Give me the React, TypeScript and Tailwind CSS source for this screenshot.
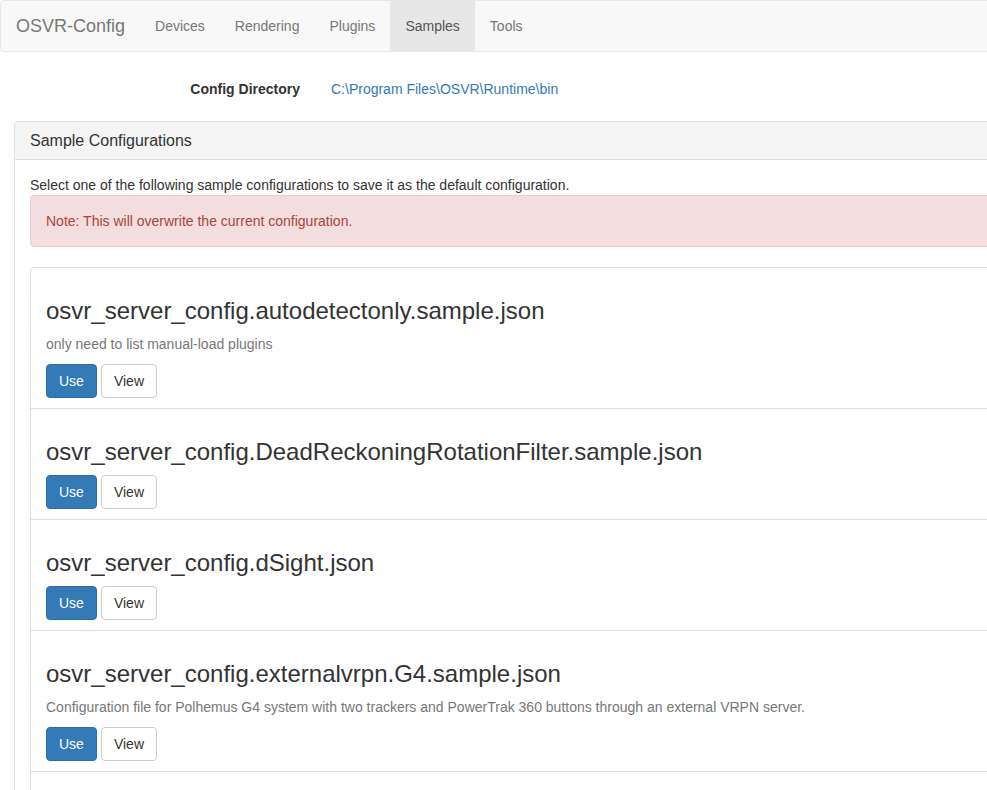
import React from "react";

type Sample = { name: string; description?: string };

const samples: Sample[] = [
  { name: "osvr_server_config.autodetectonly.sample.json", description: "only need to list manual-load plugins" },
  { name: "osvr_server_config.DeadReckoningRotationFilter.sample.json" },
  { name: "osvr_server_config.dSight.json" },
  {
    name: "osvr_server_config.externalvrpn.G4.sample.json",
    description:
      "Configuration file for Polhemus G4 system with two trackers and PowerTrak 360 buttons through an external VRPN server.",
  },
  { name: "osvr_server_config.HDK.sample.json" },
];

const navItems = ["Devices", "Rendering", "Plugins", "Samples", "Tools"];

function SampleItem({ s, first }: { s: Sample; first: boolean }) {
  return (
    <div
      className={`border border-[#ddd] bg-white px-[15px] py-[10px] ${first ? "rounded-t" : "-mt-px"}`}
    >
      <h3 className="mt-[20px] mb-[10px] text-[24px] leading-[26px] font-normal text-[#333]">{s.name}</h3>
      {s.description ? <p className="mb-[10px] text-[14px] leading-[20px] text-[#777]">{s.description}</p> : null}
      <div className="flex gap-[4px]">
        <button className="rounded border border-[#2e6da4] bg-[#337ab7] px-[12px] py-[6px] text-[14px] leading-[20px] text-white">
          Use
        </button>
        <button className="rounded border border-[#ccc] bg-white px-[12px] py-[6px] text-[14px] leading-[20px] text-[#333]">
          View
        </button>
      </div>
    </div>
  );
}

export default function App() {
  return (
    <div className="w-full overflow-hidden bg-white text-[14px] leading-[20px] text-[#333] font-['Liberation_Sans',Arial,sans-serif]">
      <div className="w-[1200px]">
        <nav className="mb-[20px] flex h-[52px] rounded border border-[#e7e7e7] bg-[#f8f8f8]">
          <div className="h-[50px] px-[15px] py-[15px] text-[18px] leading-[20px] text-[#777]">OSVR-Config</div>
          <div className="flex">
            {navItems.map((n) => (
              <div
                key={n}
                className={`h-[50px] px-[15px] py-[15px] text-[14px] leading-[20px] ${
                  n === "Samples" ? "bg-[#e7e7e7] text-[#555]" : "text-[#777]"
                }`}
              >
                {n}
              </div>
            ))}
          </div>
        </nav>

        <div className="mb-[15px] flex h-[34px]">
          <div className="w-[315px] px-[15px] pt-[7px] text-right font-bold">Config Directory</div>
          <div className="px-[16px] pt-[7px] text-[#337ab7]">{"C:\\Program Files\\OSVR\\Runtime\\bin"}</div>
        </div>

        <div className="mx-[14px] rounded border border-[#ddd] bg-white">
          <div className="rounded-t border-b border-[#ddd] bg-[#f5f5f5] px-[15px] py-[10px]">
            <h3 className="text-[16px] leading-[17px] font-normal text-[#333]">Sample Configurations</h3>
          </div>
          <div className="p-[15px]">
            <p>Select one of the following sample configurations to save it as the default configuration.</p>
            <div className="mb-[20px] rounded border border-[#ebccd1] bg-[#f2dede] p-[15px] text-[#a94442]">
              Note: This will overwrite the current configuration.
            </div>
            <div className="flex flex-col">
              {samples.map((s, i) => (
                <SampleItem key={s.name} s={s} first={i === 0} />
              ))}
            </div>
          </div>
        </div>
      </div>
    </div>
  );
}
